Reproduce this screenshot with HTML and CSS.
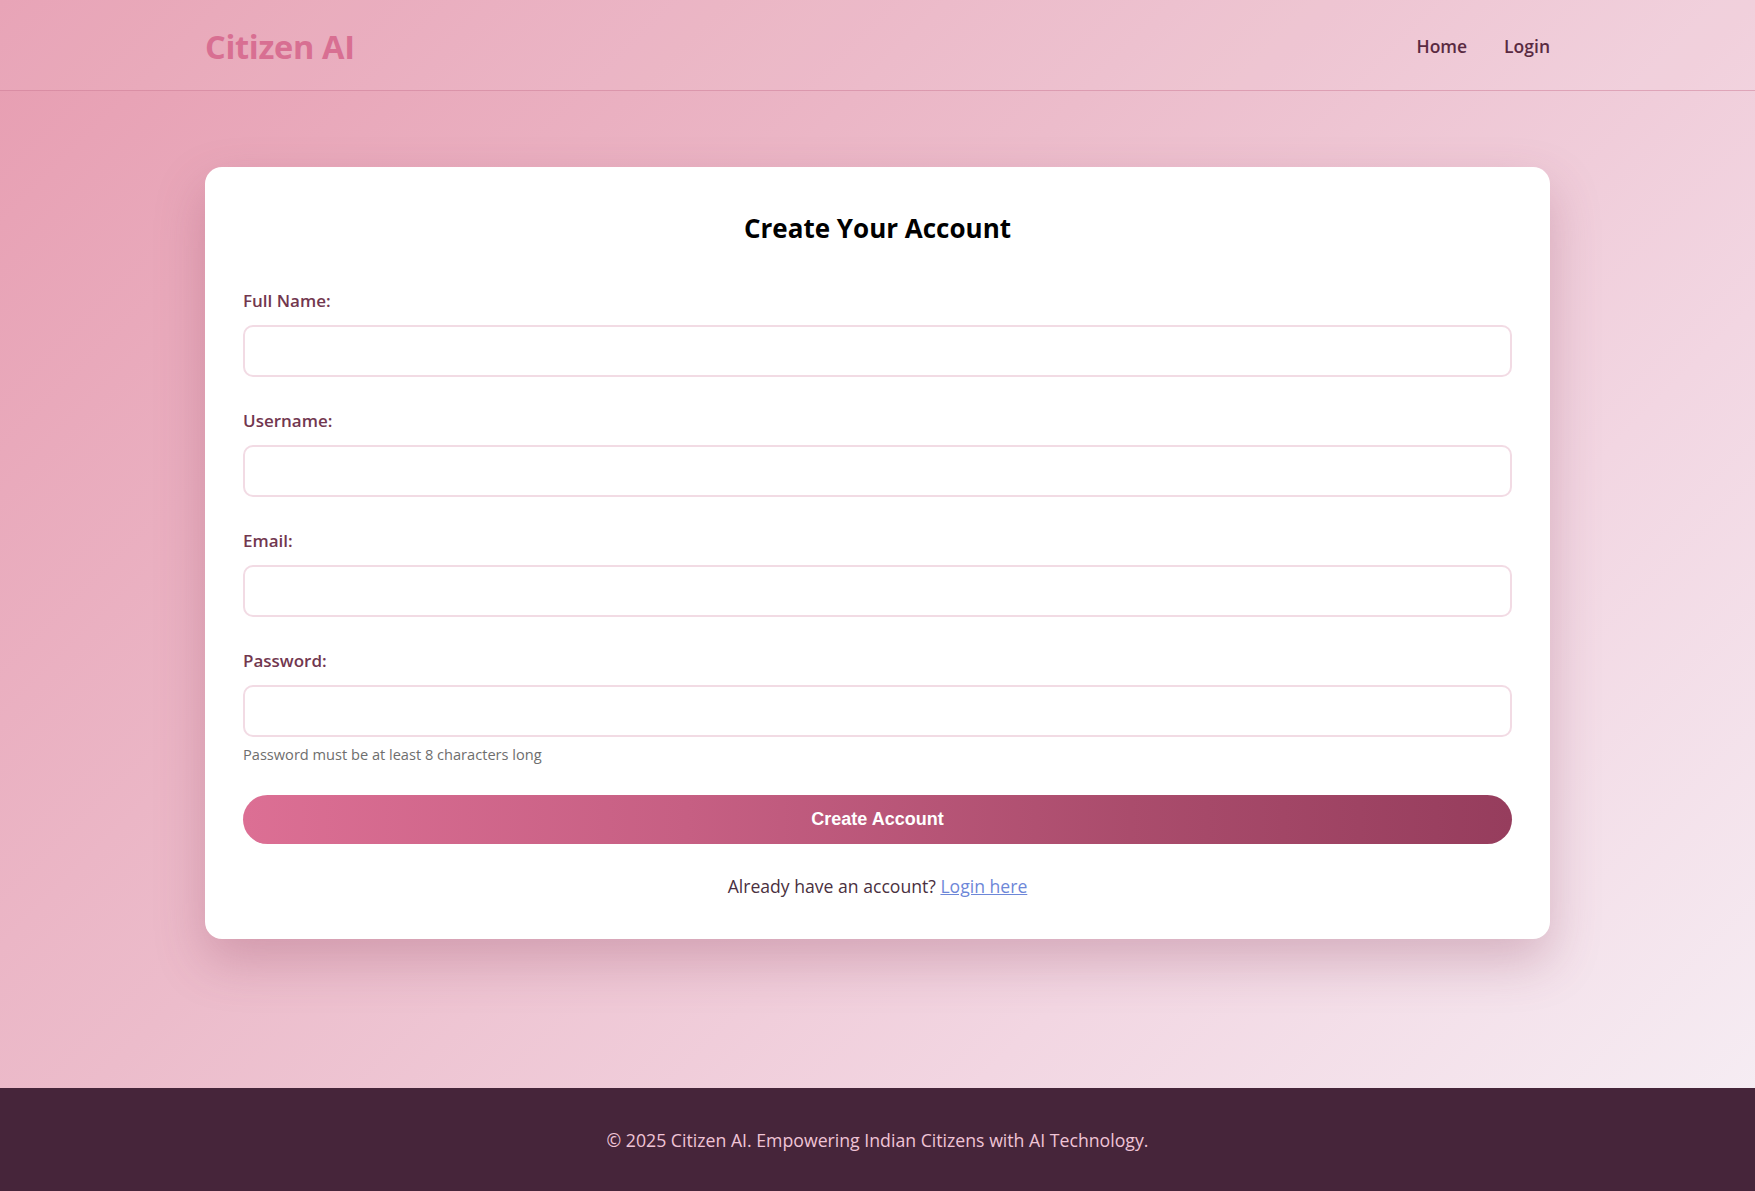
FILE: index.html
```html
<!DOCTYPE html>
<html lang="en">
<head>
<meta charset="utf-8">
<title>Citizen AI - Register</title>
<link rel="stylesheet" href="styles.css">
</head>
<body>
<header class="site-header">
  <div class="container header-inner">
    <a class="logo" href="#">Citizen AI</a>
    <nav class="nav">
      <a href="#">Home</a>
      <a href="#">Login</a>
    </nav>
  </div>
</header>
<main class="main">
  <div class="container">
    <div class="card">
      <h2 class="card-title">Create Your Account</h2>
      <form class="form">
        <div class="group">
          <label class="label">Full Name:</label>
          <input class="input" type="text">
        </div>
        <div class="group">
          <label class="label">Username:</label>
          <input class="input" type="text">
        </div>
        <div class="group">
          <label class="label">Email:</label>
          <input class="input" type="email">
        </div>
        <div class="group group-last">
          <label class="label">Password:</label>
          <input class="input" type="password">
          <small class="hint">Password must be at least 8 characters long</small>
        </div>
        <button class="btn" type="button">Create Account</button>
      </form>
      <p class="alt">Already have an account? <a href="#">Login here</a></p>
    </div>
  </div>
</main>
<footer class="site-footer">
  <p>© 2025 Citizen AI. Empowering Indian Citizens with AI Technology.</p>
</footer>
</body>
</html>
```
FILE: styles.css
```css
* { box-sizing: border-box; }
html, body { margin: 0; padding: 0; }
body {
  min-height: 1191px;
  display: flex;
  flex-direction: column;
  font-family: "Open Sans", "Noto Sans", sans-serif;
  background: linear-gradient(135deg, #e79db1 0%, #ecbccb 40%, #f2d6e2 70%, #f6eff5 100%);
  color: #3a2030;
}
.container {
  width: 1345px;
  margin: 0 auto;
}
.site-header {
  height: 91px;
  border-bottom: 1px solid rgba(200, 110, 140, 0.45);
  background: rgba(255, 255, 255, 0.08);
}
.header-inner {
  height: 90px;
  padding-top: 2px;
  display: flex;
  align-items: center;
  justify-content: space-between;
}
.logo {
  font-size: 32.5px;
  font-weight: 700;
  color: #d86f92;
  text-decoration: none;
  letter-spacing: -0.3px;
}
.nav {
  display: flex;
  gap: 37px;
}
.nav a {
  font-size: 17.5px;
  font-weight: 600;
  color: #5a2a42;
  text-decoration: none;
}
.main {
  flex: 1;
  padding-top: 76px;
}
.card {
  background: #fff;
  border-radius: 17px;
  padding: 45px 38px 40px;
  box-shadow: 0 22px 50px rgba(140, 60, 90, 0.28);
}
.card-title {
  margin: 0 0 44px;
  text-align: center;
  font-size: 26px;
  line-height: 32px;
  font-weight: 700;
  color: #000;
}
.group {
  margin-bottom: 31px;
}
.label {
  display: block;
  font-size: 17px;
  line-height: 25px;
  font-weight: 600;
  color: #72374f;
  margin-bottom: 12px;
}
.input {
  display: block;
  width: 100%;
  height: 52px;
  border: 2px solid #f2dbe4;
  border-radius: 10px;
  background: #fff;
  outline: none;
  font-size: 17px;
}
.hint {
  display: block;
  margin-top: 7px;
  font-size: 14.6px;
  line-height: 20px;
  color: #6e6e6e;
}
.btn {
  display: block;
  width: 100%;
  height: 49px;
  border: 0;
  border-radius: 25px;
  background: linear-gradient(90deg, #dc6f94 0%, #c65f83 35%, #aa4c6c 70%, #963d5d 100%);
  color: #fff;
  font-family: "Liberation Sans", Arial, sans-serif;
  font-size: 18px;
  font-weight: 700;
  cursor: pointer;
}
.alt {
  margin: 30px 0 0;
  text-align: center;
  font-size: 17.6px;
  line-height: 25px;
  color: #4a3040;
}
.alt a {
  color: #6d87d8;
  text-decoration: underline;
}
.site-footer {
  height: 103px;
  background: #46253a;
  display: flex;
  align-items: center;
  justify-content: center;
}
.site-footer p {
  margin: 0;
  font-size: 17.7px;
  color: #f0c4d6;
}
```
